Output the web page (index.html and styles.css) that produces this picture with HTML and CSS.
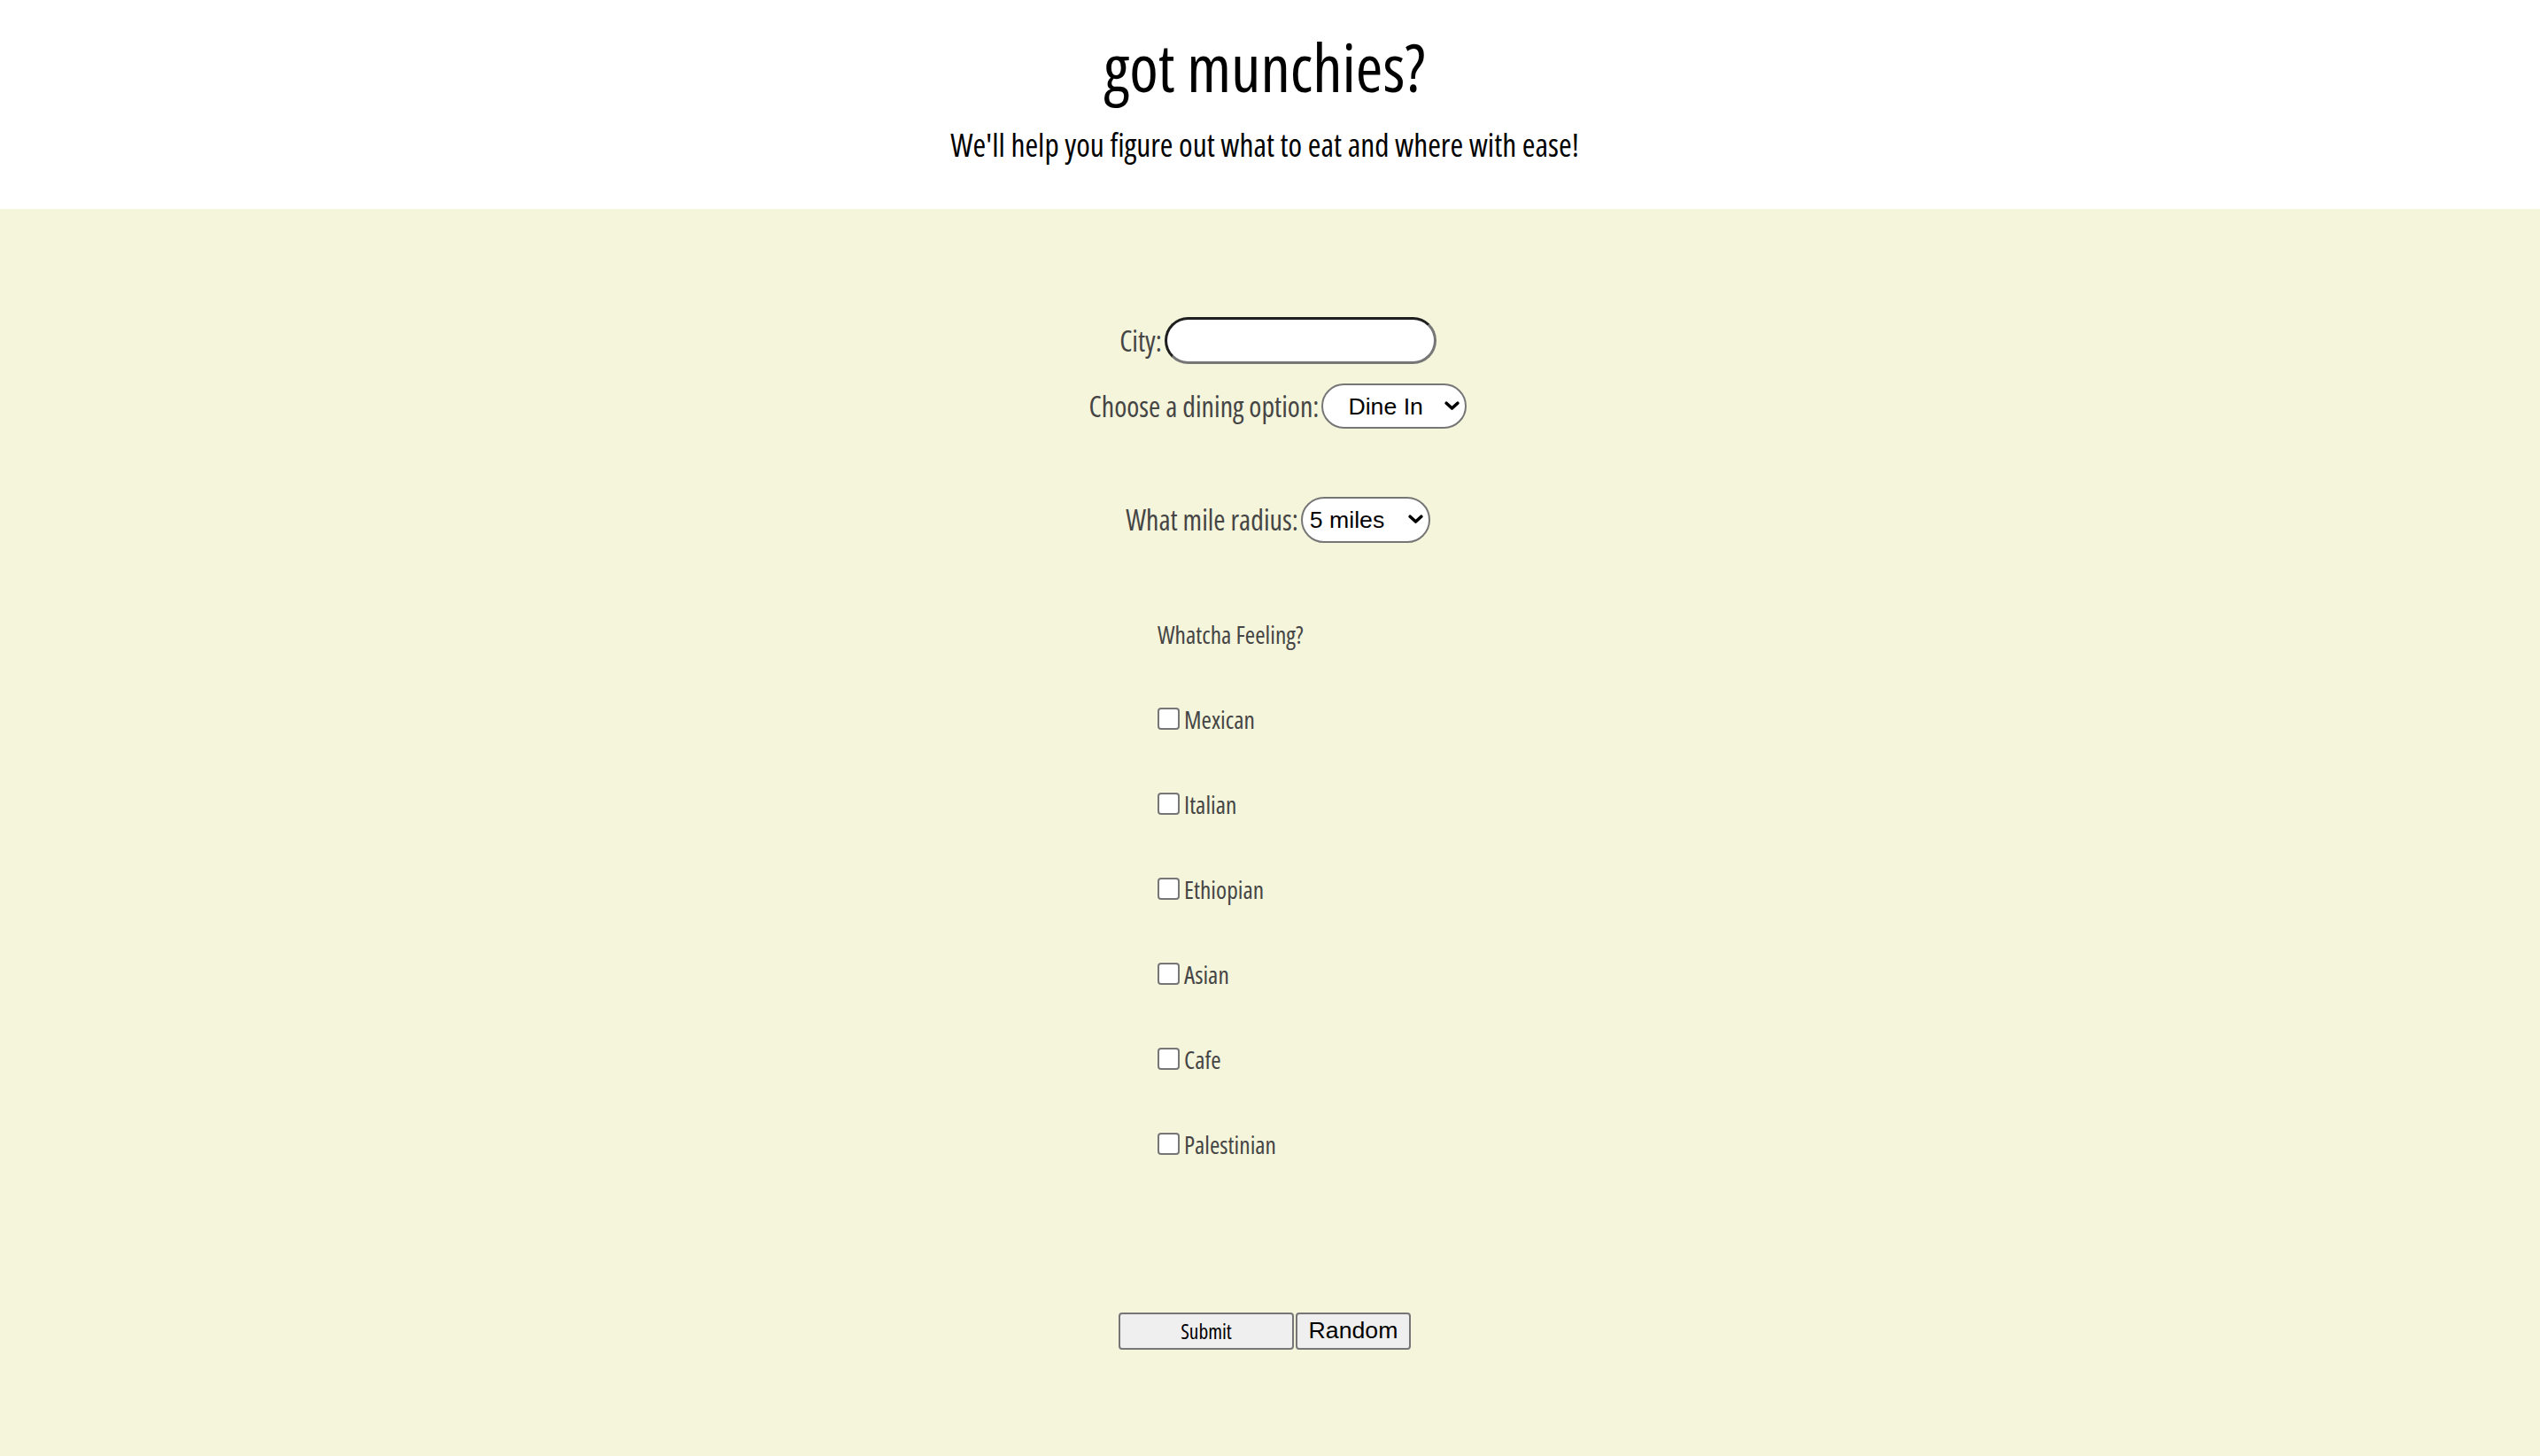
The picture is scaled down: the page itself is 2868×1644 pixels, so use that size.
FILE: index.html
```html
<!DOCTYPE html>
<html lang="en">
<head>
<meta charset="utf-8">
<title>got munchies?</title>
<link rel="stylesheet" href="styles.css">
</head>
<body>
<header class="site-header">
  <h1 class="title">got munchies?</h1>
  <p class="tagline">We'll help you figure out what to eat and where with ease!</p>
</header>
<main class="finder">
  <form class="finder-form">
    <div class="field field-city">
      <label class="field-label" for="city">City:</label>
      <input class="text-input" id="city" type="text">
    </div>
    <div class="field field-dining">
      <label class="field-label" for="dining">Choose a dining option:</label>
      <span class="select-wrap">
        <select class="select select-dining" id="dining">
          <option>Dine In</option>
          <option>Take Out</option>
        </select>
        <svg class="chevron" viewBox="0 0 17 10" width="17" height="10"><path d="M2.2 2.2 L8.5 8 L14.8 2.2" fill="none" stroke="#000" stroke-width="3.6" stroke-linecap="round" stroke-linejoin="round"/></svg>
      </span>
    </div>
    <div class="field field-radius">
      <label class="field-label" for="radius">What mile radius:</label>
      <span class="select-wrap">
        <select class="select select-radius" id="radius">
          <option>5 miles</option>
          <option>10 miles</option>
          <option>25 miles</option>
        </select>
        <svg class="chevron" viewBox="0 0 17 10" width="17" height="10"><path d="M2.2 2.2 L8.5 8 L14.8 2.2" fill="none" stroke="#000" stroke-width="3.6" stroke-linecap="round" stroke-linejoin="round"/></svg>
      </span>
    </div>
    <div class="cuisines">
      <p class="cuisines-title">Whatcha Feeling?</p>
      <div class="cuisine-list">
        <label class="cuisine"><input class="checkbox" type="checkbox"><span class="cuisine-name">Mexican</span></label>
        <label class="cuisine"><input class="checkbox" type="checkbox"><span class="cuisine-name">Italian</span></label>
        <label class="cuisine"><input class="checkbox" type="checkbox"><span class="cuisine-name">Ethiopian</span></label>
        <label class="cuisine"><input class="checkbox" type="checkbox"><span class="cuisine-name">Asian</span></label>
        <label class="cuisine"><input class="checkbox" type="checkbox"><span class="cuisine-name">Cafe</span></label>
        <label class="cuisine"><input class="checkbox" type="checkbox"><span class="cuisine-name">Palestinian</span></label>
      </div>
    </div>
    <div class="actions">
      <button class="btn btn-submit" type="submit">Submit</button><button class="btn btn-random" type="button">Random</button>
    </div>
  </form>
</main>
</body>
</html>
```
FILE: styles.css
```css
html, body {
  margin: 0;
  padding: 0;
}

body {
  background: #f5f5dc;
  min-height: 100vh;
  font-family: "Open Sans", sans-serif;
  font-stretch: 75%;
  color: #000;
}

.site-header {
  background: #fff;
  padding: 39px 12px 55px 0;
  text-align: center;
}

.title {
  margin: 0;
  font-size: 74px;
  line-height: 1;
  font-weight: 400;
}

.tagline {
  margin: 32.5px 0 0;
  font-size: 35.5px;
  line-height: 1;
}

.finder {
  padding: 122px 0 80px;
}

.field {
  display: flex;
  justify-content: center;
  align-items: center;
  gap: 3px;
  padding-left: 18px;
}

.field-dining {
  margin-top: 22px;
}

.field-radius {
  margin-top: 77px;
}

.field-label {
  font-size: 32px;
  line-height: 1;
  color: #454545;
}

.text-input {
  box-sizing: border-box;
  width: 307px;
  height: 53px;
  margin: 0;
  border: 3px solid;
  border-color: #1e1e1e #767676 #767676 #1e1e1e;
  border-radius: 27px;
  background: #fff;
  padding: 0 12px;
  font-family: "Liberation Sans", Arial, sans-serif;
  font-size: 26px;
}

.select-wrap {
  position: relative;
  display: inline-flex;
}

.select {
  appearance: none;
  -webkit-appearance: none;
  box-sizing: border-box;
  border: 2px solid #767676;
  border-radius: 27px;
  background: #fff;
  color: #000;
  font-family: "Liberation Sans", Arial, sans-serif;
  font-stretch: normal;
  font-size: 26.67px;
  margin: 0;
}

.select-dining {
  width: 164px;
  height: 51px;
  padding: 0 0 0 28px;
}

.select-radius {
  width: 146px;
  height: 52px;
  padding: 0 0 0 8px;
}

.chevron {
  position: absolute;
  right: 8px;
  top: 50%;
  margin-top: -6px;
  pointer-events: none;
}

.cuisines {
  width: 254px;
  margin: 90px auto 0;
}

.cuisines-title {
  margin: 0;
  font-size: 27.5px;
  line-height: 1;
  color: #454545;
}

.cuisine-list {
  display: flex;
  flex-direction: column;
  gap: 64.8px;
  margin-top: 65px;
}

.cuisine {
  display: flex;
  align-items: center;
  gap: 5px;
  font-size: 27.5px;
  color: #454545;
}

.checkbox {
  appearance: none;
  -webkit-appearance: none;
  box-sizing: border-box;
  flex: none;
  margin: 0;
  width: 25px;
  height: 25px;
  border: 2.5px solid #767676;
  border-radius: 4px;
  background: #fff;
}

.cuisine-name {
  line-height: 1;
  padding-top: 3.7px;
}

.actions {
  display: flex;
  justify-content: center;
  gap: 2px;
  margin-top: 175px;
  padding-right: 12px;
}

.btn {
  box-sizing: border-box;
  height: 42px;
  margin: 0;
  padding: 0;
  background: #efefef;
  border: 2px solid #767676;
  border-radius: 4px;
  color: #000;
}

.btn-submit {
  width: 198px;
  font-family: "Open Sans", sans-serif;
  font-stretch: 75%;
  font-size: 23.5px;
}

.btn-random {
  width: 130px;
  font-family: "Liberation Sans", Arial, sans-serif;
  font-size: 26.67px;
}
```
